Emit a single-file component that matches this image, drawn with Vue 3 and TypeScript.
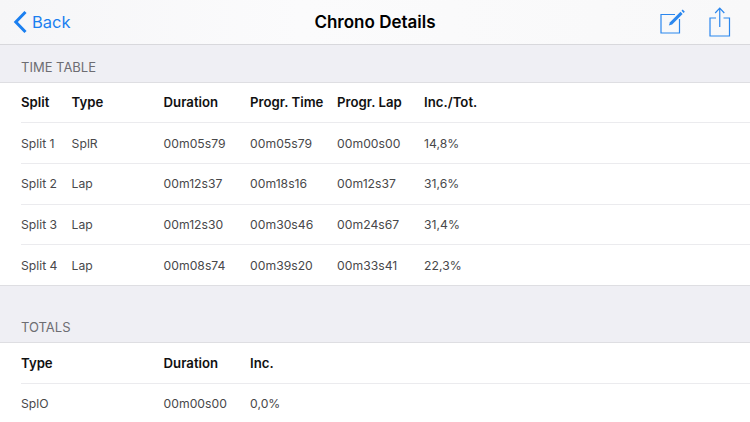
<script setup lang="ts">
const columns = ["Split", "Type", "Duration", "Progr. Time", "Progr. Lap", "Inc./Tot."];

const splits = [
  ["Split 1", "SplR", "00m05s79", "00m05s79", "00m00s00", "14,8%"],
  ["Split 2", "Lap", "00m12s37", "00m18s16", "00m12s37", "31,6%"],
  ["Split 3", "Lap", "00m12s30", "00m30s46", "00m24s67", "31,4%"],
  ["Split 4", "Lap", "00m08s74", "00m39s20", "00m33s41", "22,3%"],
];
</script>

<template>
  <div class="page">
    <header class="navbar">
      <a class="back">
        <svg width="15" height="24" viewBox="0 0 15 24" fill="none">
          <path d="M12.5 2 L2.8 12 L12.5 22" stroke="#1b7ff0" stroke-width="3" />
        </svg>
        <span>Back</span>
      </a>
      <h1>Chrono Details</h1>
      <div class="actions">
        <svg class="edit" width="26" height="26" viewBox="0 0 26 26" fill="none">
          <path d="M15 6.5 H1 V25 H19.5 V11" stroke="#2b87ee" stroke-width="1.2" />
          <path d="M8.8 17.6 L10 14.3 L20.5 3.8 L22.6 5.9 L12.1 16.4 Z" fill="#2b87ee" />
          <path d="M21.5 2.8 L22.7 1.6 L24.8 3.7 L23.6 4.9 Z" fill="#2b87ee" />
        </svg>
        <svg width="22" height="30" viewBox="0 0 22 30" fill="none">
          <path d="M7 11 H1 V29 H20.5 V11 H14.5" stroke="#2b87ee" stroke-width="1.2" />
          <path d="M10.75 20 V1.5 M6.2 6 L10.75 1.2 L15.3 6" stroke="#2b87ee" stroke-width="1.2" />
        </svg>
      </div>
    </header>

    <div class="section-title first">TIME TABLE</div>
    <section class="table">
      <div class="row head splits">
        <div v-for="col in columns" :key="col">{{ col }}</div>
      </div>
      <div v-for="row in splits" :key="row[0]" class="row splits">
        <div v-for="(cell, i) in row" :key="i">{{ cell }}</div>
      </div>
    </section>

    <div class="section-title second">TOTALS</div>
    <section class="table open">
      <div class="row head totals">
        <div>Type</div>
        <div>Duration</div>
        <div>Inc.</div>
      </div>
      <div class="row totals">
        <div>SplO</div>
        <div>00m00s00</div>
        <div>0,0%</div>
      </div>
    </section>
  </div>
</template>

<style>
html,
body {
  margin: 0;
  overflow: hidden;
}
</style>

<style scoped>
.page {
  width: 750px;
  height: 422px;
  overflow: hidden;
  background: #efeff4;
  font-family: Inter, "Liberation Sans", sans-serif;
  color: #1a1a1a;
}

.navbar {
  height: 44px;
  box-sizing: content-box;
  display: flex;
  align-items: center;
  justify-content: space-between;
  position: relative;
  background: linear-gradient(90deg, #f6f6f8, #fbfbfc 40%, #f8f8f9);
  border-bottom: 1px solid #d8d8dc;
}

.back {
  display: flex;
  align-items: center;
  gap: 4px;
  margin-left: 13px;
  color: #1b7ff0;
  font-size: 16.5px;
}

.navbar h1 {
  position: absolute;
  left: 0;
  right: 0;
  margin: 0;
  text-align: center;
  font-size: 17px;
  font-weight: 600;
  color: #000;
}

.actions {
  display: flex;
  align-items: center;
  gap: 23.5px;
  margin-right: 19px;
}

.edit {
  margin-top: -3px;
}

.section-title {
  display: flex;
  align-items: flex-end;
  box-sizing: border-box;
  padding: 0 0 7px 21px;
  font-size: 13px;
  color: #6d6d72;
  border-bottom: 1px solid #dedee2;
}

.section-title.first {
  height: 37.5px;
}

.section-title.second {
  height: 57px;
}

.table {
  background: #fff;
  padding-left: 21px;
  border-bottom: 1px solid #dedee2;
}

.table.open {
  border-bottom: none;
  height: 80px;
}

.row {
  display: grid;
  align-items: center;
  height: 39.7px;
  font-size: 12.2px;
  color: #48484a;
  border-bottom: 1px solid #ebebee;
}

.row:last-child {
  border-bottom: none;
}

.head {
  color: #111;
  font-size: 13.2px;
  font-weight: 600;
}

.splits {
  grid-template-columns: 50.6px 92px 86.5px 87px 87px 1fr;
}

.totals {
  grid-template-columns: 142.6px 86.5px 1fr;
}
</style>
